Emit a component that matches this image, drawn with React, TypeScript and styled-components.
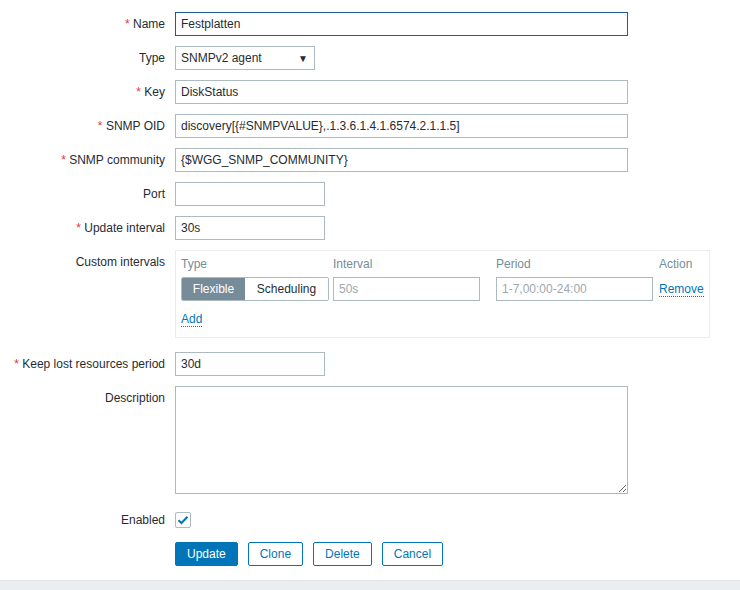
import { createGlobalStyle, styled } from 'styled-components';

const GlobalStyle = createGlobalStyle`
  body {
    margin: 0;
    background: #ffffff;
    font-family: 'Liberation Sans', Arial, sans-serif;
    font-size: 12px;
    color: #1f2c33;
  }
`;

const App = () => {
  return (
    <>
      <GlobalStyle />
      <Form>
        <Row>
          <Label required>Name</Label>
          <TextInput focused width={453} defaultValue="Festplatten" />
        </Row>
        <Row>
          <Label>Type</Label>
          <Select>
            <span>SNMPv2 agent</span>
            <Arrow>▼</Arrow>
          </Select>
        </Row>
        <Row>
          <Label required>Key</Label>
          <TextInput width={453} defaultValue="DiskStatus" />
        </Row>
        <Row>
          <Label required>SNMP OID</Label>
          <TextInput width={453} defaultValue="discovery[{#SNMPVALUE},.1.3.6.1.4.1.6574.2.1.1.5]" />
        </Row>
        <Row>
          <Label required>SNMP community</Label>
          <TextInput width={453} defaultValue="{$WGG_SNMP_COMMUNITY}" />
        </Row>
        <Row>
          <Label>Port</Label>
          <TextInput width={150} defaultValue="" />
        </Row>
        <Row>
          <Label required>Update interval</Label>
          <TextInput width={150} defaultValue="30s" />
        </Row>
        <Row top spaced>
          <Label>Custom intervals</Label>
          <IntervalBox>
            <IntervalGrid>
              <HeadCell>Type</HeadCell>
              <HeadCell>Interval</HeadCell>
              <HeadCell>Period</HeadCell>
              <HeadCell>Action</HeadCell>
              <Segmented>
                <Segment active>Flexible</Segment>
                <Segment>Scheduling</Segment>
              </Segmented>
              <TextInput width={147} muted defaultValue="50s" />
              <TextInput width={157} muted defaultValue="1-7,00:00-24:00" />
              <LinkCell>
                <Link>Remove</Link>
              </LinkCell>
            </IntervalGrid>
            <AddLine>
              <Link>Add</Link>
            </AddLine>
          </IntervalBox>
        </Row>
        <Row>
          <Label required>Keep lost resources period</Label>
          <TextInput width={150} defaultValue="30d" />
        </Row>
        <Row top>
          <Label>Description</Label>
          <TextArea />
        </Row>
        <Row spacedTop>
          <Label>Enabled</Label>
          <Checkbox>
            <svg width="12" height="10" viewBox="0 0 12 10">
              <path d="M1.5 5.2 L4.5 8 L10.5 1.8" fill="none" stroke="#0275b8" strokeWidth="2" />
            </svg>
          </Checkbox>
        </Row>
        <Row>
          <span />
          <Buttons>
            <Button primary>Update</Button>
            <Button>Clone</Button>
            <Button>Delete</Button>
            <Button>Cancel</Button>
          </Buttons>
        </Row>
      </Form>
      <Footer />
    </>
  );
};

export default App;

const Form = styled.div`
  display: flex;
  flex-direction: column;
  gap: 10px;
  padding-top: 12px;
`;

const Row = styled.div<{ top?: boolean; spaced?: boolean; spacedTop?: boolean }>`
  display: grid;
  grid-template-columns: 165px auto;
  column-gap: 10px;
  align-items: ${(p) => (p.top ? 'start' : 'center')};
  min-height: 24px;
  margin-bottom: ${(p) => (p.spaced ? '4px' : '0')};
  margin-top: ${(p) => (p.spacedTop ? '4px' : '0')};
`;

const Label = styled.label<{ required?: boolean }>`
  text-align: right;
  line-height: 24px;
  white-space: nowrap;
  color: #1f2c33;
  &::before {
    content: ${(p) => (p.required ? "'* '" : "''")};
    color: #e33734;
  }
`;

const TextInput = styled.input<{ width: number; focused?: boolean; muted?: boolean }>`
  box-sizing: border-box;
  width: ${(p) => p.width}px;
  height: 24px;
  padding: 0 5px;
  font-family: inherit;
  font-size: 12px;
  color: ${(p) => (p.muted ? '#9ca9b0' : '#1f2c33')};
  background: #ffffff;
  border: 1px solid ${(p) => (p.focused ? '#1a5e92' : '#acbbc2')};
  border-radius: 0;
  outline: none;
`;

const Select = styled.div`
  box-sizing: border-box;
  width: 140px;
  height: 24px;
  display: flex;
  align-items: center;
  justify-content: space-between;
  padding: 0 6px 0 5px;
  border: 1px solid #acbbc2;
  background: #ffffff;
`;

const Arrow = styled.span`
  font-size: 10px;
  color: #1f2c33;
`;

const IntervalBox = styled.div`
  box-sizing: border-box;
  width: 535px;
  border: 1px solid #ebeef0;
  padding: 5px 5px 10px;
`;

const IntervalGrid = styled.div`
  display: grid;
  grid-template-columns: 152px 163px 163px 1fr;
  row-gap: 5px;
  align-items: center;
`;

const HeadCell = styled.div`
  color: #768d99;
  line-height: 16px;
`;

const Segmented = styled.div`
  display: flex;
  width: 148px;
  height: 24px;
  box-sizing: border-box;
  border: 1px solid #acbbc2;
  border-radius: 2px;
  overflow: hidden;
`;

const Segment = styled.div<{ active?: boolean }>`
  display: flex;
  align-items: center;
  justify-content: center;
  flex: ${(p) => (p.active ? '0 0 63px' : '1')};
  background: ${(p) => (p.active ? '#768d99' : '#ffffff')};
  color: ${(p) => (p.active ? '#ffffff' : '#1f2c33')};
`;

const LinkCell = styled.div`
  line-height: 16px;
`;

const Link = styled.a`
  color: #0275b8;
  text-decoration: none;
  border-bottom: 1px dotted #0275b8;
  cursor: pointer;
`;

const AddLine = styled.div`
  margin-top: 10px;
  line-height: 16px;
`;

const TextArea = styled.textarea`
  box-sizing: border-box;
  width: 453px;
  height: 108px;
  border: 1px solid #acbbc2;
  margin: 0;
  padding: 4px 5px;
  font-family: inherit;
  font-size: 12px;
  outline: none;
`;

const Checkbox = styled.span`
  box-sizing: border-box;
  width: 16px;
  height: 16px;
  border: 1px solid #acbbc2;
  border-radius: 2px;
  display: flex;
  align-items: center;
  justify-content: center;
  background: #ffffff;
`;

const Buttons = styled.div`
  display: flex;
  gap: 10px;
`;

const Button = styled.button<{ primary?: boolean }>`
  box-sizing: border-box;
  height: 24px;
  padding: 0 11px;
  font-family: inherit;
  font-size: 12px;
  border-radius: 2px;
  border: 1px solid #0275b8;
  background: ${(p) => (p.primary ? '#0275b8' : '#ffffff')};
  color: ${(p) => (p.primary ? '#ffffff' : '#0275b8')};
  cursor: pointer;
`;

const Footer = styled.div`
  margin-top: 14px;
  height: 30px;
  background: #ebeef0;
  border-top: 1px solid #e3e7ea;
`;
